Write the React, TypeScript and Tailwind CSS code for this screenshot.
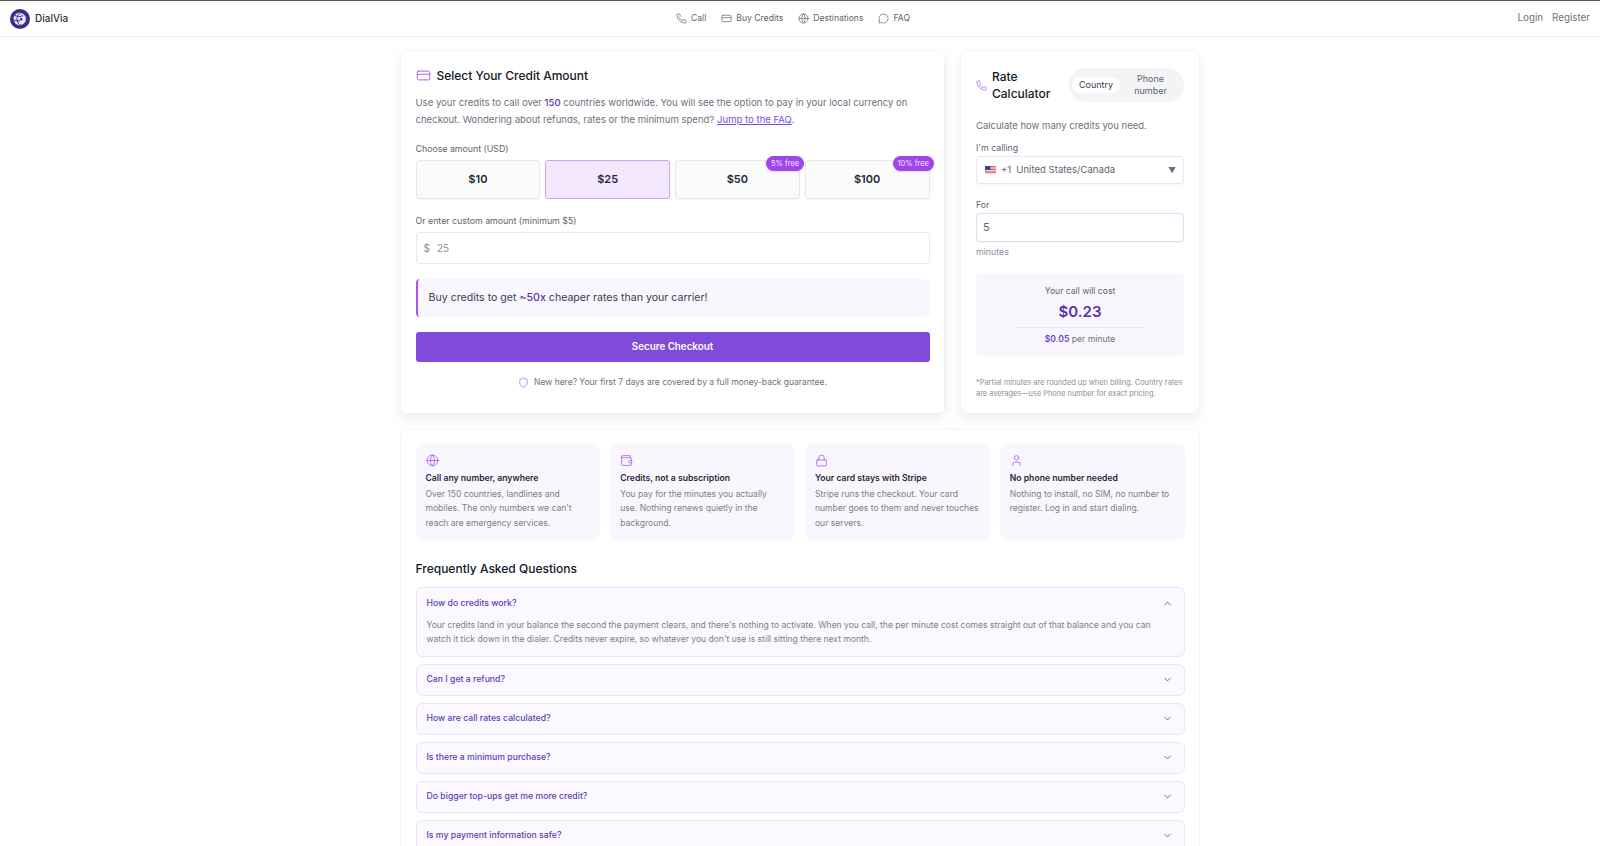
import { Phone, CreditCard, Globe, MessageCircle, Shield, Wallet, Lock, User, ChevronUp, ChevronDown } from "lucide-react";

const navLinks = [
  { label: "Call", icon: Phone },
  { label: "Buy Credits", icon: CreditCard },
  { label: "Destinations", icon: Globe },
  { label: "FAQ", icon: MessageCircle },
];

const amounts = [
  { label: "$10" },
  { label: "$25", selected: true },
  { label: "$50", badge: "5% free" },
  { label: "$100", badge: "10% free" },
];

const features = [
  { icon: Globe, title: "Call any number, anywhere", text: "Over 150 countries, landlines and mobiles. The only numbers we can't reach are emergency services." },
  { icon: Wallet, title: "Credits, not a subscription", text: "You pay for the minutes you actually use. Nothing renews quietly in the background." },
  { icon: Lock, title: "Your card stays with Stripe", text: "Stripe runs the checkout. Your card number goes to them and never touches our servers." },
  { icon: User, title: "No phone number needed", text: "Nothing to install, no SIM, no number to register. Log in and start dialing." },
];

const faqs = [
  "Can I get a refund?",
  "How are call rates calculated?",
  "Is there a minimum purchase?",
  "Do bigger top-ups get me more credit?",
  "Is my payment information safe?",
];

const Logo = () => (
  <svg width="20" height="20" viewBox="0 0 20 20" className="shrink-0">
    <circle cx="10" cy="10" r="10" fill="#3a2a8e" />
    <circle cx="10" cy="10" r="6.4" fill="#e8e6f4" />
    <path d="M10 3.6a6.4 6.4 0 0 1 0 12.8M5 6.5c2 1.2 5 1.4 8 .2M4 11c2.500 1 5 1 6 .6M10 3.600c-2 2-3 4.200-3 6.400s1 4.400 3 6.400" fill="none" stroke="#3a2a8e" strokeWidth="1" />
    <path d="M10.500 8.500c.8.200 1.800 1 2 2l-1 1.300c-.7-.2-1.400-.8-1.800-1.500z" fill="#3a2a8e" />
  </svg>
);

const UsFlag = () => (
  <svg width="11" height="8" viewBox="0 0 11 8" className="shrink-0">
    <rect width="11" height="8" rx="1" fill="#f3d6da" />
    <rect y="0" width="11" height="1.300" fill="#d9616d" />
    <rect y="2.700" width="11" height="1.300" fill="#d9616d" />
    <rect y="5.400" width="11" height="1.300" fill="#d9616d" />
    <rect width="5.500" height="4" fill="#3f4a80" />
  </svg>
);

export default function App() {
  return (
    <div className="h-[846px] overflow-hidden bg-white font-['Inter',sans-serif] text-[#111827]">
      <header className="grid h-[37px] grid-cols-3 items-center border-t border-b border-t-[#555555] border-b-[#f0f0f2] px-[10px]">
        <div className="flex items-center gap-[5px]">
          <Logo />
          <span className="text-[10px] font-medium text-[#333]">DialVia</span>
        </div>
        <nav className="flex justify-center gap-[15px] pr-[14px]">
          {navLinks.map(({ label, icon: Icon }) => (
            <a key={label} className="flex items-center gap-[4px] text-[8.600px] text-[#5f6470]">
              <Icon size={11} strokeWidth={1.5} />
              {label}
            </a>
          ))}
        </nav>
        <div className="flex justify-end gap-[9px] text-[9.800px] text-[#6b7280]">
          <a>Login</a>
          <a>Register</a>
        </div>
      </header>

      <main className="mx-auto w-[798px] pt-[15px]">
        <div className="flex gap-[17px]">
          <section className="h-[361px] w-[543px] rounded-[5px] bg-white px-[14.500px] pt-[15px] shadow-[0_4px_14px_rgba(17,24,39,0.09),0_0_2px_rgba(17,24,39,0.05)]">
            <div className="flex h-[17px] items-center gap-[6px]">
              <CreditCard size={15} strokeWidth={1.5} className="text-[#a855f7]" />
              <h2 className="text-[12px] font-medium">Select Your Credit Amount</h2>
            </div>
            <p className="mt-[11px] text-[9.570px] leading-[16.500px] text-[#6b7280]">
              Use your credits to call over <span className="font-medium text-[#5b34b0]">150</span> countries worldwide. You will see the option to pay in your local currency on checkout. Wondering about refunds, rates or the minimum spend?{" "}
              <a className="text-[#7c4ddb] underline">Jump to the FAQ</a>.
            </p>
            <div className="mt-[15px] text-[8.800px] leading-[12px] text-[#5f6470]">Choose amount (USD)</div>
            <div className="mt-[5px] grid grid-cols-4 gap-[5px]">
              {amounts.map(a => (
                <button
                  key={a.label}
                  className={
                    a.selected
                      ? "relative h-[39px] rounded-[3px] border border-[#c9a5f5] bg-[#f3e8fd] text-[11px] font-semibold text-[#1f2937]"
                      : "relative h-[39px] rounded-[3px] border border-[#e7e8ec] bg-[#fafbfb] text-[11px] font-semibold text-[#1f2937] shadow-[0_1px_2px_rgba(0,0,0,0.05)]"
                  }
                >
                  {a.label}
                  {a.badge && (
                    <span className="absolute right-[-5px] top-[-5px] rounded-full bg-[#a044ee] px-[4.500px] py-[2px] text-[7.500px] leading-[11px] font-normal text-[#f3e4ff] shadow-sm">
                      {a.badge}
                    </span>
                  )}
                </button>
              ))}
            </div>
            <div className="mt-[16px] text-[8.800px] leading-[12px] text-[#5f6470]">Or enter custom amount (minimum $5)</div>
            <div className="mt-[5px] flex h-[32px] items-center gap-[7px] rounded-[3px] border border-[#ece4fb] px-[7px] text-[10px] text-[#8b8f99]">
              <span>$</span>
              <span>25</span>
            </div>
            <div className="mt-[15px] flex h-[38px] items-center rounded-[4px] border-l-[2px] border-[#a855f7] bg-[#faf6fe] pl-[11px] text-[10.600px] text-[#374151]">
              <span>
                Buy credits to get <span className="font-medium text-[#5b34b0]">~50x</span> cheaper rates than your carrier!
              </span>
            </div>
            <button className="mt-[15px] h-[30px] w-full rounded-[3px] bg-[#7f4bd8] text-[9.800px] font-semibold text-white">Secure Checkout</button>
            <div className="mt-[14px] flex items-center justify-center gap-[5px] text-[8.500px] text-[#6b7280]">
              <Shield size={11} strokeWidth={1.5} className="text-[#a855f7]" />
              New here? Your first 7 days are covered by a full money-back guarantee.
            </div>
          </section>

          <section className="h-[361px] w-[238px] rounded-[7px] bg-white px-[15px] pt-[16px] shadow-[0_4px_14px_rgba(17,24,39,0.09),0_0_2px_rgba(17,24,39,0.05)]">
            <div className="flex items-center justify-between">
              <div className="flex items-center gap-[5px]">
                <Phone size={11} strokeWidth={1.5} className="text-[#a855f7]" />
                <h2 className="w-[65px] text-[12px] leading-[17px] font-medium">Rate Calculator</h2>
              </div>
              <div className="flex h-[34px] w-[115px] items-center rounded-full bg-[#f3f4f6] px-[3px] text-[9px] text-[#5f6470]">
                <span className="flex h-[16px] w-[48px] items-center justify-center rounded-full bg-white text-[#374151]">Country</span>
                <span className="flex-1 text-center leading-[12.500px]">Phone number</span>
              </div>
            </div>
            <p className="mt-[17px] text-[9.500px] leading-[14px] text-[#6b7280]">Calculate how many credits you need.</p>
            <div className="mt-[9px] text-[8.800px] leading-[12px] text-[#5f6470]">I'm calling</div>
            <div className="mt-[2px] flex h-[28px] items-center justify-between rounded-[3px] border border-[#ece4fb] pr-[7px] pl-[8px] text-[9.600px] text-[#5f6470] shadow-[0_1px_2px_rgba(0,0,0,0.04)]">
              <span className="flex items-center gap-[5px]">
                <UsFlag />
                <span>+1</span>
                <span>United States/Canada</span>
              </span>
              <span className="text-[8px] text-[#6b7080]">▼</span>
            </div>
            <div className="mt-[15px] text-[8.800px] leading-[12px] text-[#5f6470]">For</div>
            <div className="mt-[2px] flex h-[29px] items-center rounded-[3px] border border-[#e4d9f9] px-[6px] text-[11px] text-[#5f6470] shadow-[0_1px_2px_rgba(0,0,0,0.04)]">5</div>
            <div className="mt-[3px] text-[8.800px] leading-[14px] text-[#8b8f99]">minutes</div>
            <div className="mt-[14px] flex h-[83px] flex-col items-center rounded-[4px] bg-[#faf6fe] pt-[11px]">
              <div className="text-[8.600px] leading-[14px] text-[#5f6470]">Your call will cost</div>
              <div className="mt-[4px] text-[15px] leading-[20px] font-semibold text-[#5b2fb0]">$0.23</div>
              <div className="mt-[5px] w-[127px] border-t border-[#ece4fb]" />
              <div className="mt-[5px] text-[8.600px] leading-[12px] text-[#6b7280]">
                <span className="font-semibold text-[#6d45c0]">$0.05</span> per minute
              </div>
            </div>
            <p className="mt-[21px] text-[7.400px] leading-[11px] text-[#8b8f99]">*Partial minutes are rounded up when billing. Country rates are averages—use Phone number for exact pricing.</p>
          </section>
        </div>

        <section className="mt-[17px] rounded-[5px] bg-white px-[14.500px] pt-[14px] shadow-[0_0_3px_rgba(17,24,39,0.1)]">
          <div className="grid grid-cols-4 gap-[10px]">
            {features.map(({ icon: Icon, title, text }) => (
              <div key={title} className="h-[96px] rounded-[6px] bg-[#faf6fe] px-[10px] pt-[10px]">
                <Icon size={13} strokeWidth={1.5} className="text-[#a855f7]" />
                <div className="mt-[5px] text-[8.650px] leading-[12px] font-semibold text-[#1f2937]">{title}</div>
                <p className="mt-[3px] text-[8.550px] leading-[14.300px] text-[#7b7f8a]">{text}</p>
              </div>
            ))}
          </div>
          <h3 className="mt-[21px] text-[12px] leading-[16px] font-medium">Frequently Asked Questions</h3>
          <div className="mt-[10px] flex flex-col gap-[7px]">
            <div className="h-[69.500px] rounded-[6px] border border-[#ece4fb] bg-[#fbf8ff] pt-[8px] pr-[11px] pl-[10px]">
              <div className="flex items-center justify-between">
                <span className="text-[8.700px] leading-[14px] font-medium text-[#5f3db3]">How do credits work?</span>
                <ChevronUp size={11} strokeWidth={1.75} className="text-[#5b34b0]" />
              </div>
              <p className="mt-[8px] text-[8.550px] leading-[14.300px] text-[#7b7f8a]">
                Your credits land in your balance the second the payment clears, and there's nothing to activate. When you call, the per minute cost comes straight out of that balance and you can watch it tick down in the dialer. Credits never expire, so whatever you don't use is still sitting there next month.
              </p>
            </div>
            {faqs.map(q => (
              <div key={q} className="flex h-[32px] shrink-0 items-center justify-between rounded-[6px] border border-[#ece4fb] bg-[#fbf8ff] pr-[11px] pl-[10px]">
                <span className="text-[8.700px] font-medium text-[#5f3db3]">{q}</span>
                <ChevronDown size={11} strokeWidth={1.75} className="text-[#5b34b0]" />
              </div>
            ))}
          </div>
        </section>
      </main>
    </div>
  );
}
